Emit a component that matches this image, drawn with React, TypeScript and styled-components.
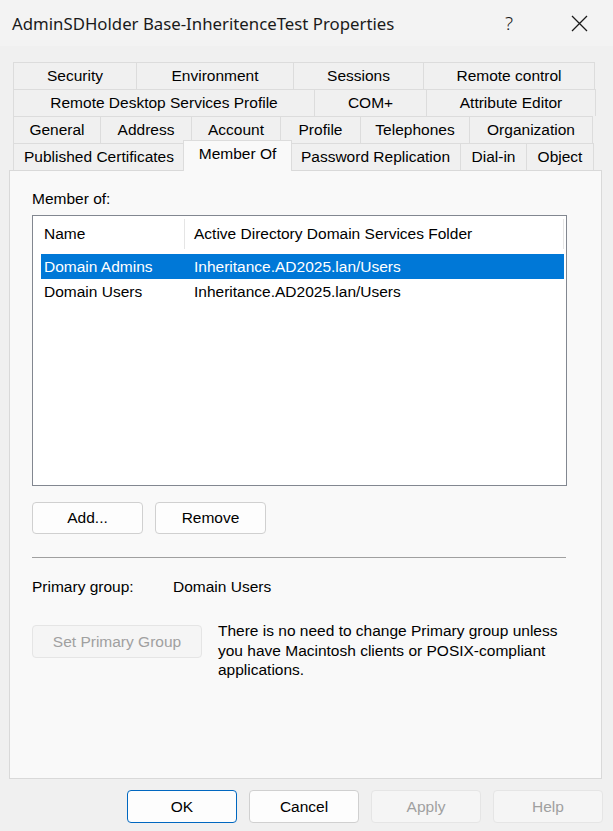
import React from "react"
import styled, { createGlobalStyle } from "styled-components"

const GlobalStyle = createGlobalStyle`
  html, body {
    margin: 0;
    padding: 0;
    background: #f0f0f0;
  }
  * {
    box-sizing: border-box;
  }
`

type TabDef = { label: string; width: number; active?: boolean }

const tabRows: TabDef[][] = [
  [
    { label: "Security", width: 124 },
    { label: "Environment", width: 158 },
    { label: "Sessions", width: 131 },
    { label: "Remote control", width: 172 },
  ],
  [
    { label: "Remote Desktop Services Profile", width: 302 },
    { label: "COM+", width: 113 },
    { label: "Attribute Editor", width: 170 },
  ],
  [
    { label: "General", width: 88 },
    { label: "Address", width: 92 },
    { label: "Account", width: 90 },
    { label: "Profile", width: 81 },
    { label: "Telephones", width: 110 },
    { label: "Organization", width: 124 },
  ],
  [
    { label: "Published Certificates", width: 172 },
    { label: "Member Of", width: 107, active: true },
    { label: "Password Replication", width: 171 },
    { label: "Dial-in", width: 67 },
    { label: "Object", width: 68 },
  ],
]

const groups = [
  { name: "Domain Admins", folder: "Inheritance.AD2025.lan/Users", selected: true },
  { name: "Domain Users", folder: "Inheritance.AD2025.lan/Users" },
]

export default function App() {
  return (
    <>
      <GlobalStyle />
      <Window>
        <TitleBar>
          <Title>AdminSDHolder Base-InheritenceTest Properties</Title>
          <Controls>
            <CaptionButton>
              <HelpMark>?</HelpMark>
            </CaptionButton>
            <CaptionButton>
              <svg width="17" height="17" viewBox="0 0 17 17">
                <path d="M1 1 L16 16 M16 1 L1 16" stroke="#1a1a1a" strokeWidth="1.3" fill="none" />
              </svg>
            </CaptionButton>
          </Controls>
        </TitleBar>

        <TabStrip>
          {tabRows.map((row, i) => (
            <TabRow key={i}>
              {row.map((t) => (
                <Tab key={t.label} $width={t.width} $active={t.active}>
                  {t.label}
                </Tab>
              ))}
            </TabRow>
          ))}
        </TabStrip>

        <Panel>
          <Label>Member of:</Label>
          <ListBox>
            <ListHeader>
              <HeaderCell $width={152}>Name</HeaderCell>
              <HeaderCell $width={379} $pad={9}>
                Active Directory Domain Services Folder
              </HeaderCell>
            </ListHeader>
            <ListBody>
              {groups.map((g) => (
                <ListRow key={g.name} $selected={g.selected}>
                  <NameCell>{g.name}</NameCell>
                  <span>{g.folder}</span>
                </ListRow>
              ))}
            </ListBody>
          </ListBox>

          <ButtonRow>
            <Button $width={111}>Add...</Button>
            <Button $width={111}>Remove</Button>
          </ButtonRow>

          <Separator />

          <PrimaryRow>
            <PrimaryLabel>Primary group:</PrimaryLabel>
            <span>Domain Users</span>
          </PrimaryRow>

          <SetRow>
            <Button $width={170} $height={33} disabled>
              Set Primary Group
            </Button>
            <Hint>
              There is no need to change Primary group unless you have Macintosh clients or
              POSIX-compliant applications.
            </Hint>
          </SetRow>
        </Panel>

        <Footer>
          <Button $width={110} $height={33} $default>
            OK
          </Button>
          <Button $width={110} $height={33}>
            Cancel
          </Button>
          <Button $width={110} $height={33} disabled>
            Apply
          </Button>
          <Button $width={110} $height={33} disabled>
            Help
          </Button>
        </Footer>
      </Window>
    </>
  )
}

const Window = styled.div`
  width: 613px;
  height: 831px;
  display: flex;
  flex-direction: column;
  background: #f0f0f0;
  font-family: "Liberation Sans", Arial, sans-serif;
  font-size: 15.5px;
  color: #000;
  overflow: hidden;
`

const TitleBar = styled.div`
  height: 46px;
  display: flex;
  align-items: center;
  justify-content: space-between;
  padding-left: 12px;
  background: #f3f3f3;
`

const Title = styled.div`
  font-family: "Noto Sans", "Open Sans", sans-serif;
  font-size: 16.8px;
  color: #1a1a1a;
`

const Controls = styled.div`
  display: flex;
  gap: 24px;
  margin-right: 11px;
`

const CaptionButton = styled.div`
  width: 46px;
  height: 46px;
  display: flex;
  align-items: center;
  justify-content: center;
`

const HelpMark = styled.span`
  font-family: "Noto Sans", sans-serif;
  font-size: 19px;
  font-weight: 300;
  color: #1a1a1a;
`

const TabStrip = styled.div`
  margin: 16px 0 0 13px;
  width: 585px;
  display: flex;
  flex-direction: column;
`

const TabRow = styled.div`
  display: flex;
  height: 27px;
`

const Tab = styled.div<{ $width: number; $active?: boolean }>`
  width: ${(p) => p.$width}px;
  flex: none;
  display: flex;
  align-items: center;
  justify-content: center;
  white-space: nowrap;
  border: 1px solid #dcdcdc;
  border-bottom: none;
  margin-right: -1px;
  background: #f0f0f0;
  &:last-child {
    margin-right: 0;
  }
  ${(p) =>
    p.$active &&
    `
    position: relative;
    z-index: 1;
    background: #f9f9f9;
    margin-top: -3px;
    height: 31px;
    padding-bottom: 4px;
    margin-left: -1px;
    width: ${p.$width + 2}px;
    margin-right: -2px;
  `}
`

const Panel = styled.div`
  margin-left: 9px;
  width: 593px;
  height: 609px;
  background: #f9f9f9;
  border: 1px solid #d9d9d9;
  padding: 18px 34px 0 22px;
  display: flex;
  flex-direction: column;
`

const Label = styled.div`
  line-height: 19px;
`

const ListBox = styled.div`
  margin-top: 7px;
  height: 271px;
  background: #fff;
  border: 1px solid #828790;
  display: flex;
  flex-direction: column;
`

const ListHeader = styled.div`
  display: flex;
  height: 33px;
  padding-top: 3px;
`

const HeaderCell = styled.div<{ $width: number; $pad?: number }>`
  width: ${(p) => p.$width}px;
  padding-left: ${(p) => p.$pad ?? 11}px;
  border-right: 1px solid #e5e5e5;
  display: flex;
  align-items: center;
  white-space: nowrap;
`

const ListBody = styled.div`
  margin-top: 5px;
  padding: 0 2px 0 8px;
  display: flex;
  flex-direction: column;
`

const ListRow = styled.div<{ $selected?: boolean }>`
  height: 25px;
  display: flex;
  align-items: center;
  padding-left: 3px;
  background: ${(p) => (p.$selected ? "#0078d7" : "transparent")};
  color: ${(p) => (p.$selected ? "#fff" : "#000")};
`

const NameCell = styled.span`
  width: 150px;
  flex: none;
`

const ButtonRow = styled.div`
  display: flex;
  gap: 12px;
  margin-top: 16px;
`

const Button = styled.button<{ $width: number; $height?: number; $default?: boolean }>`
  width: ${(p) => p.$width}px;
  height: ${(p) => p.$height ?? 32}px;
  flex: none;
  font-family: "Liberation Sans", Arial, sans-serif;
  font-size: 15.5px;
  color: #000;
  background: #fdfdfd;
  border: 1px solid ${(p) => (p.$default ? "#0067c0" : "#d0d0d0")};
  border-radius: 4px;
  padding: 0;
  &:disabled {
    color: #a0a0a0;
    background: #f5f5f5;
    border-color: #e5e5e5;
  }
`

const Separator = styled.div`
  margin-top: 23px;
  height: 1px;
  width: 534px;
  background: #a0a0a0;
`

const PrimaryRow = styled.div`
  margin-top: 19px;
  display: flex;
  line-height: 19px;
`

const PrimaryLabel = styled.span`
  width: 141px;
`

const SetRow = styled.div`
  margin-top: 25px;
  display: flex;
  align-items: flex-start;
  gap: 16px;
  & > button {
    margin-top: 4px;
  }
`

const Hint = styled.div`
  width: 352px;
  line-height: 19.5px;
`

const Footer = styled.div`
  display: flex;
  justify-content: flex-end;
  gap: 12px;
  padding: 11px 10px 0 0;
`
